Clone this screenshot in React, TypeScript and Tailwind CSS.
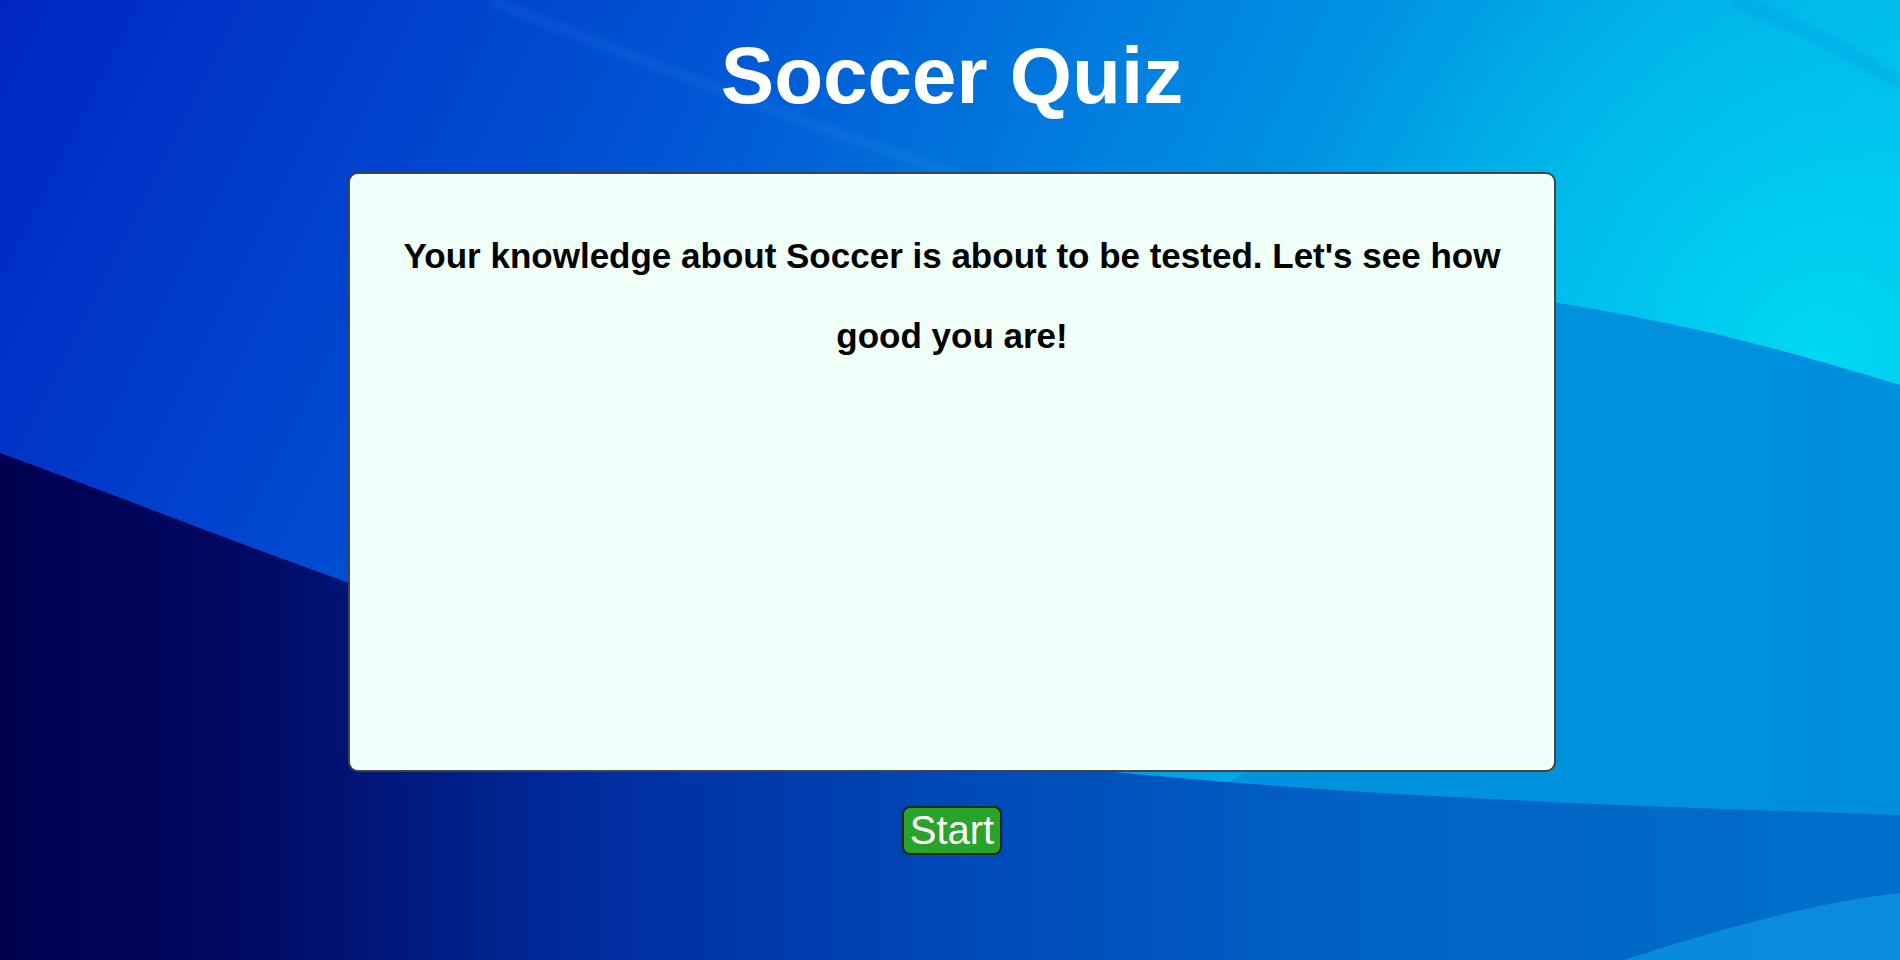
function Wallpaper() {
  return (
    <svg
      className="absolute inset-0 h-full w-full"
      viewBox="0 0 1900 960"
      preserveAspectRatio="none"
      aria-hidden="true"
    >
      <defs>
        <linearGradient id="base" x1="0" y1="0" x2="1" y2="0.25">
          <stop offset="0" stopColor="#0026c2" />
          <stop offset="0.35" stopColor="#0052d4" />
          <stop offset="0.6" stopColor="#0084e0" />
          <stop offset="0.85" stopColor="#00aee8" />
          <stop offset="1" stopColor="#00c4ee" />
        </linearGradient>
        <radialGradient id="glow" cx="1820" cy="360" r="560" gradientUnits="userSpaceOnUse">
          <stop offset="0" stopColor="#00d8f2" stopOpacity="1" />
          <stop offset="0.55" stopColor="#00c4ee" stopOpacity="0.6" />
          <stop offset="1" stopColor="#00b0ea" stopOpacity="0" />
        </radialGradient>
        <linearGradient id="band" x1="0" y1="0" x2="1" y2="0">
          <stop offset="0" stopColor="#0096dc" />
          <stop offset="1" stopColor="#008ede" />
        </linearGradient>
        <linearGradient id="wedge" x1="0" y1="0" x2="1" y2="0">
          <stop offset="0" stopColor="#000050" />
          <stop offset="0.12" stopColor="#00085f" />
          <stop offset="0.3" stopColor="#002a9c" />
          <stop offset="0.5" stopColor="#0048b8" />
          <stop offset="0.72" stopColor="#0062c4" />
          <stop offset="1" stopColor="#0070cc" />
        </linearGradient>
        <filter id="softer" x="-10%" y="-10%" width="120%" height="120%">
          <feGaussianBlur stdDeviation="4" />
        </filter>
      </defs>
      <rect width="1900" height="960" fill="url(#base)" />
      <rect width="1900" height="960" fill="url(#glow)" />
      {/* darker band under the cyan glow */}
      <path
        d="M1540,300 C1700,325 1800,355 1900,385 L1900,900 L1000,900 C1300,780 1500,600 1540,300 Z"
        fill="url(#band)"
      />
      {/* dark wave lower left */}
      <path
        d="M0,453 C240,540 560,680 1000,760 C1300,795 1600,805 1900,815 L1900,960 L0,960 Z"
        fill="url(#wedge)"
      />
      {/* light streak bottom right */}
      <path
        d="M1624,960 C1730,925 1830,900 1900,893 L1900,960 Z"
        fill="#0a94de"
        opacity="0.8"
      />
      {/* faint highlight streaks */}
      <path d="M490,0 C640,60 820,130 960,175" stroke="#6cc0f2" strokeWidth="6" fill="none" opacity="0.16" filter="url(#softer)" />
      <path d="M1733,0 C1800,25 1860,55 1900,85" stroke="#0088dc" strokeWidth="14" fill="none" opacity="0.25" filter="url(#softer)" />
    </svg>
  );
}

export default function App() {
  return (
    <div
      className="relative h-screen w-full overflow-hidden"
      style={{ fontFamily: '"Liberation Sans", Arial, sans-serif' }}
    >
      <Wallpaper />
      <main className="relative flex flex-col items-center pl-[4px]">
        <h1 className="mt-[30px] text-[80px] leading-[92px] font-bold text-white">
          Soccer Quiz
        </h1>
        <section className="mt-[50px] h-[600px] w-[1208px] rounded-[10px] border-2 border-[#444444] bg-[#f0fff7] px-[40px] pt-[42px]">
          <p className="text-center text-[35px] leading-[80px] font-bold text-black">
            Your knowledge about Soccer is about to be tested. Let's see how good you are!
          </p>
        </section>
        <button className="mt-[34px] rounded-[8px] border-2 border-[#0f2e14] bg-[#29a329] px-[6px] text-[40px] leading-[45px] text-white">
          Start
        </button>
      </main>
    </div>
  );
}
